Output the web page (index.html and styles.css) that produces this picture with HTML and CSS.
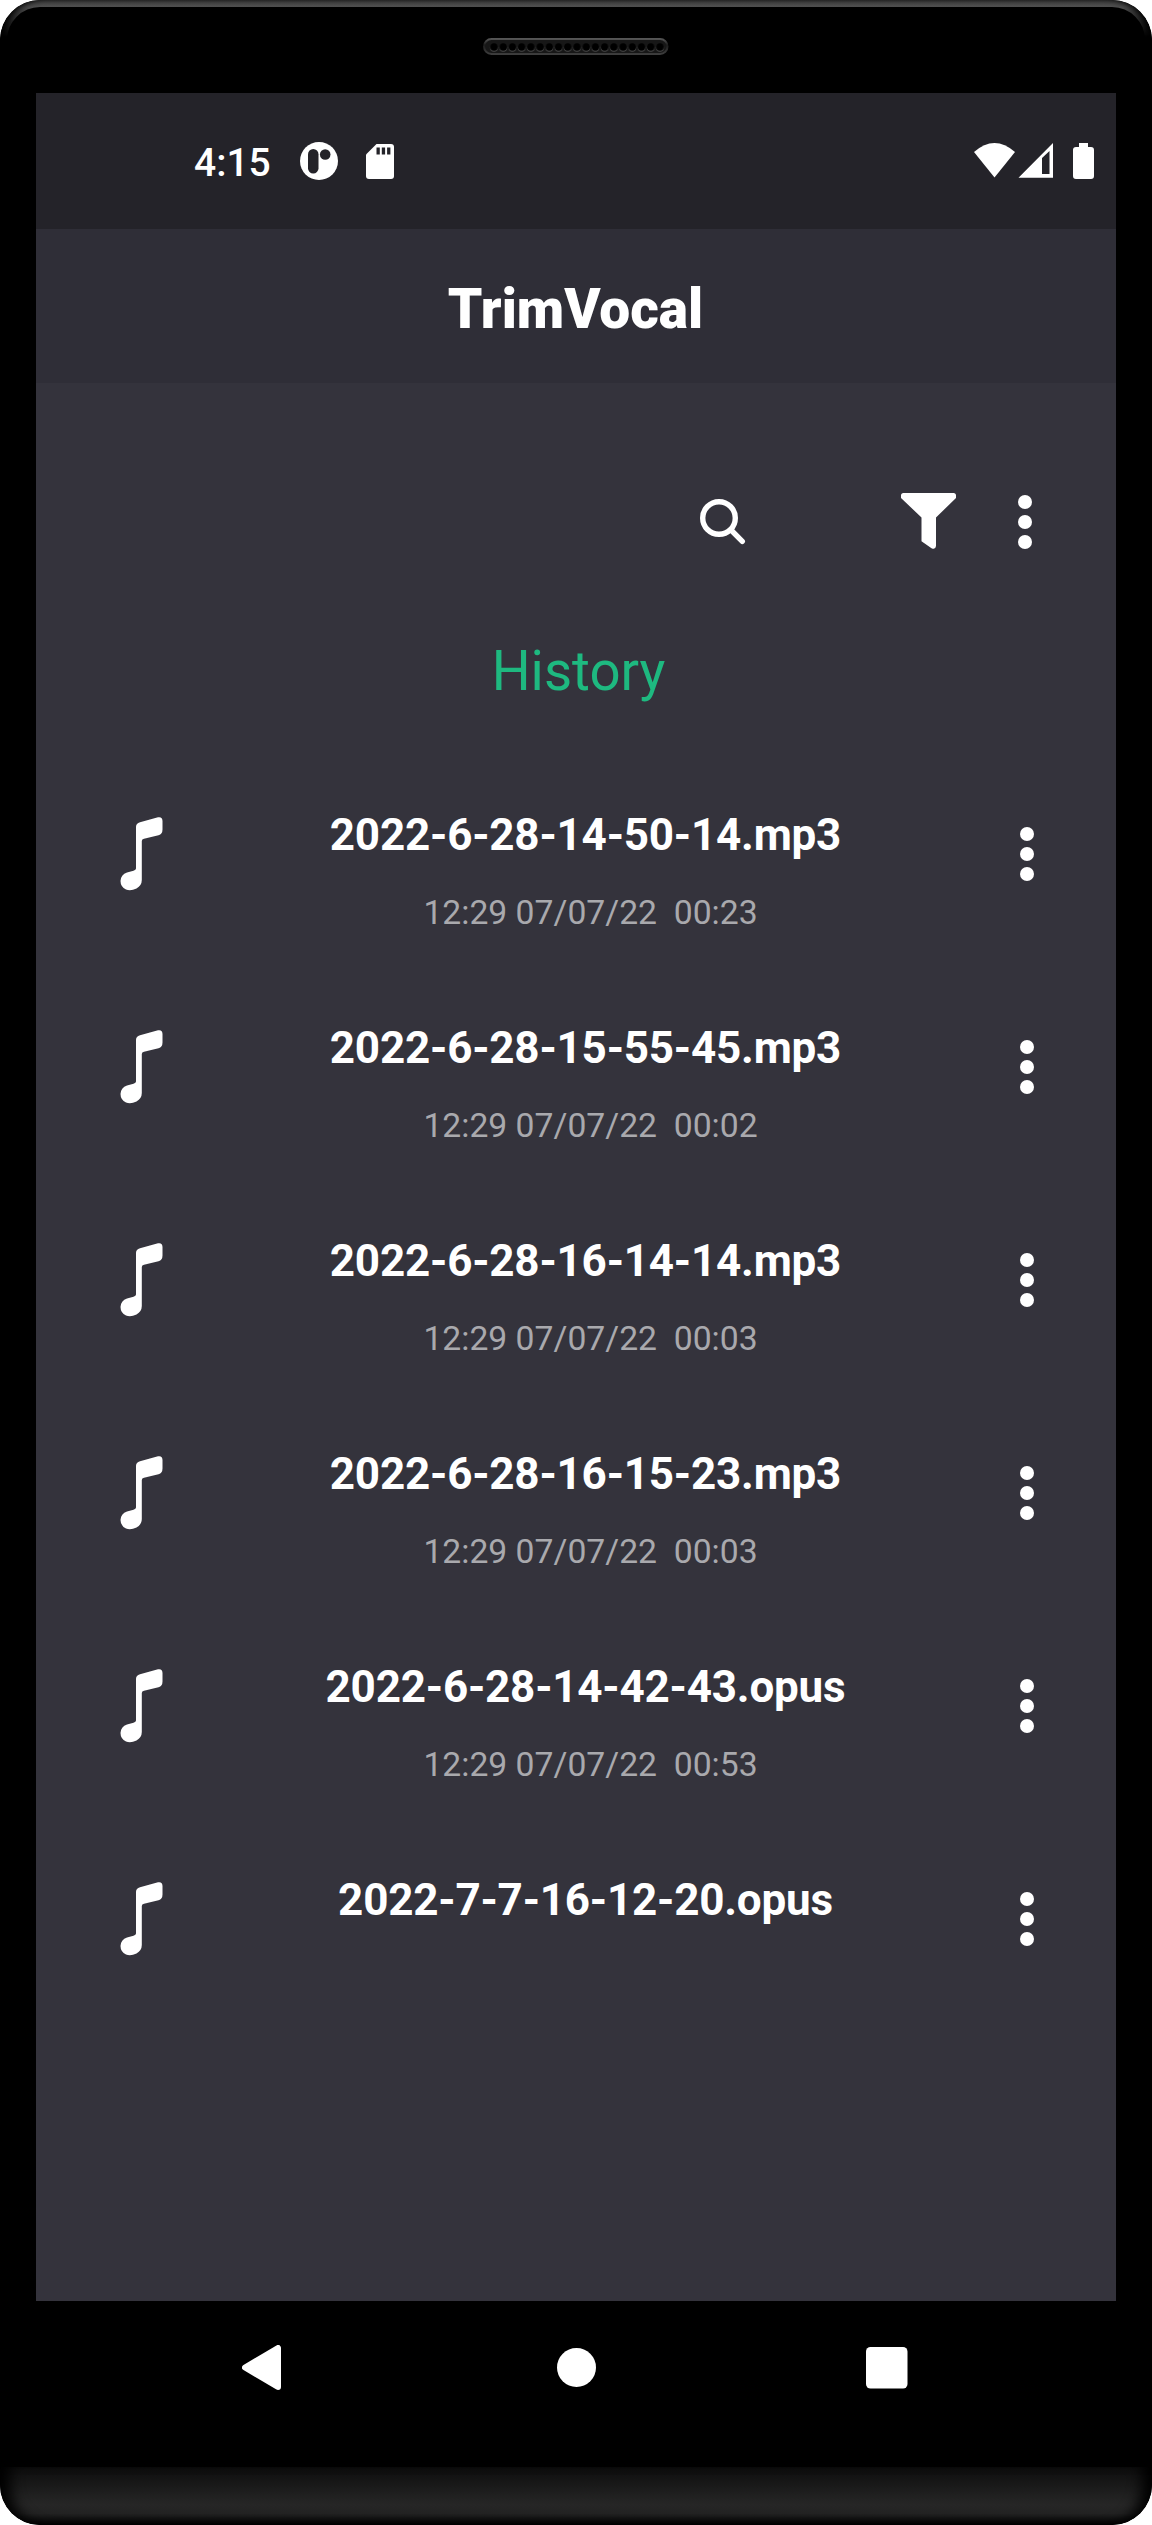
FILE: index.html
```html
<!DOCTYPE html>
<html lang="en">
<head>
<meta charset="utf-8">
<title>TrimVocal</title>
<link rel="stylesheet" href="styles.css">
</head>
<body>
<svg class="defs" width="0" height="0" aria-hidden="true">
  <symbol id="dots" viewBox="0 0 14 54"><circle cx="7" cy="7" r="7"/><circle cx="7" cy="27" r="7"/><circle cx="7" cy="47" r="7"/></symbol>
  <symbol id="note" viewBox="0 0 43 74"><path d="M20 5.200L38 .3Q42.500-.5 42.500 4V12.500Q42.500 17 38.500 18.200L24 21.800Q21.800 22.400 21.800 24V63Q21.800 68.500 16.500 71.500Q10.500 74.500 6 72.500Q.5 69.800.5 64Q.8 57.500 7 55.500L13.500 53.700Q16 53 16 51.500V10Q16 6.200 20 5.200Z"/></symbol>
</svg>
<div class="phone">
  <div class="earpiece">
    <svg width="186" height="18" viewBox="0 0 186 18">
      <defs>
        <linearGradient id="rim" x2="0" y2="1"><stop offset="0" stop-color="#555"/><stop offset=".4" stop-color="#1c1c1c"/><stop offset="1" stop-color="#3d3d3d"/></linearGradient>
        <pattern id="holes" x="6.400" y="0" width="9.220" height="18" patternUnits="userSpaceOnUse"><circle cx="4.600" cy="9.800" r="3.900" fill="#484848"/><circle cx="4.600" cy="9" r="3.700" fill="#000"/></pattern>
      </defs>
      <rect x="1" y="1" width="183.500" height="15" rx="7.500" fill="#171717" stroke="url(#rim)" stroke-width="2"/>
      <rect x="6.400" width="175.180" height="18" fill="url(#holes)"/>
    </svg>
  </div>
  <main class="screen">
    <div class="status">
      <span class="clock">4:15</span>
      <svg class="app-badge" width="38" height="38" viewBox="0 0 38 38"><circle cx="19" cy="19" r="19" fill="#fff"/><rect x="8" y="7" width="10.500" height="24.500" rx="5.250" fill="#242329"/><circle cx="25.200" cy="12.500" r="5.300" fill="#242329"/></svg>
      <svg class="sd" width="28" height="35" viewBox="0 0 28 35"><path d="M10.500 0H25Q28 0 28 3V32Q28 35 25 35H3Q0 35 0 32V10.500Z" fill="#fff"/><path d="M10.500 3.500h3.300v7h-3.300zM15.800 3.500h3.300v7h-3.300zM21.100 3.500h3.300v7h-3.300z" fill="#242329"/></svg>
      <svg class="signal" width="120" height="36" viewBox="0 0 120 36" fill="#fff"><path d="M0 9Q20.500-9 41 9L20.500 34.500Z"/><path fill-rule="evenodd" d="M44.500 34.700L79 0V34.700ZM68 15V31H75.500V8Z"/><path d="M105 0h9v4h3q3 0 3 3v26q0 3-3 3h-15q-3 0-3-3V7q0-3 3-3h3z"/></svg>
    </div>
    <header class="appbar"><h1>TrimVocal</h1></header>
    <div class="tools">
      <svg class="search" width="46" height="46" viewBox="0 0 46 46" fill="none" stroke="#fff" stroke-width="5.400" stroke-linecap="round"><circle cx="19" cy="19" r="16.300"/><path d="M31 31L42.300 42.300"/></svg>
      <svg class="filter" width="55" height="56" viewBox="0 0 55 56" fill="#fff"><path d="M2.500 0H52.500Q55 0 55 2.500V5L35 24.500V53Q34.500 57 30.500 55.200L20.500 48.300V24.500L0 5V2.500Q0 0 2.500 0Z"/></svg>
      <svg class="more" width="14" height="54" fill="#fff"><use href="#dots"/></svg>
    </div>
    <h2>History</h2>
    <ul class="list">
      <li><svg class="note"><use href="#note"/></svg><div class="info"><b>2022-6-28-14-50-14.mp3</b><span>12:29 07/07/22&nbsp; 00:23</span></div><svg class="more"><use href="#dots"/></svg></li>
      <li><svg class="note"><use href="#note"/></svg><div class="info"><b>2022-6-28-15-55-45.mp3</b><span>12:29 07/07/22&nbsp; 00:02</span></div><svg class="more"><use href="#dots"/></svg></li>
      <li><svg class="note"><use href="#note"/></svg><div class="info"><b>2022-6-28-16-14-14.mp3</b><span>12:29 07/07/22&nbsp; 00:03</span></div><svg class="more"><use href="#dots"/></svg></li>
      <li><svg class="note"><use href="#note"/></svg><div class="info"><b>2022-6-28-16-15-23.mp3</b><span>12:29 07/07/22&nbsp; 00:03</span></div><svg class="more"><use href="#dots"/></svg></li>
      <li><svg class="note"><use href="#note"/></svg><div class="info"><b>2022-6-28-14-42-43.opus</b><span>12:29 07/07/22&nbsp; 00:53</span></div><svg class="more"><use href="#dots"/></svg></li>
      <li><svg class="note"><use href="#note"/></svg><div class="info"><b>2022-7-7-16-12-20.opus</b></div><svg class="more"><use href="#dots"/></svg></li>
    </ul>
  </main>
  <nav class="nav">
    <svg width="39" height="45" viewBox="0 0 39 45"><path d="M3 22.500L36 3V42Z" fill="#fff" stroke="#fff" stroke-width="6" stroke-linejoin="round"/></svg>
    <svg width="39" height="39"><circle cx="19.500" cy="19.500" r="19.500" fill="#fff"/></svg>
    <svg width="42" height="42"><rect width="41.500" height="41.500" rx="4.500" fill="#fff"/></svg>
  </nav>
  <div class="chin"></div>
</div>
</body>
</html>
```
FILE: styles.css
```css
* { box-sizing: border-box; margin: 0; padding: 0; }
body { background: #fff; font-family: Roboto, "Liberation Sans", sans-serif; color: #fff; }
svg { display: block; flex: none; }
.defs { position: absolute; }
.phone { position: relative; width: 1152px; height: 2525px; border-radius: 40px; overflow: hidden; background: #000; display: flex; flex-direction: column; }
.phone::before { content: ""; position: absolute; inset: 0 0 auto; height: 42px; border-radius: 40px 40px 0 0; background: linear-gradient(#484848, #505050 7px, #000 38px); box-shadow: inset 7px 0 7px -2px #000, inset -7px 0 7px -2px #000; }
.phone::after { content: ""; position: absolute; inset: 7px 7px auto; height: 36px; border-radius: 33px 33px 0 0; background: #000; }
.earpiece { position: relative; z-index: 1; height: 93px; padding: 38px 0 0 483px; flex: none; }
.screen { height: 2208px; margin: 0 36px; background: #34333c; flex: none; }
.status { height: 136px; background: #242329; display: flex; padding: 0 21px 0 158px; align-items: flex-start; }
.clock { font-size: 39px; font-weight: 500; line-height: 46px; margin-top: 47px; width: 106px; white-space: nowrap; }
.app-badge { margin-top: 49px; }
.sd { margin: 51px 0 0 28px; }
.signal { margin: 50px 1px 0 auto; }
.appbar { height: 154px; padding-top: 6px; background: #2f2e37; display: flex; align-items: center; justify-content: center; }
h1 { font-size: 55px; font-weight: 900; line-height: 64px; padding-right: 1px; }
.tools { height: 256px; display: flex; align-items: flex-start; padding-left: 664px; }
.search { margin-top: 116px; }
.filter { margin: 110px 0 0 155px; }
.tools .more { margin: 112px 0 0 62px; }
h2 { font-size: 54.600px; font-weight: 400; line-height: 64px; color: #1eb980; text-align: center; padding-left: 5px; }
.list { list-style: none; padding-top: 106px; }
.list li { height: 213px; display: flex; align-items: flex-start; padding: 0 82px 0 84px; }
.note { width: 43px; height: 74px; margin-top: 8px; fill: #fff; }
.info { flex: 1; display: flex; flex-direction: column; align-items: center; padding-right: 12px; }
.info b { font-size: 44px; letter-spacing: -0.2px; line-height: 52px; font-weight: 700; white-space: nowrap; }
.info span { font-size: 33.700px; line-height: 40px; margin-top: 32px; padding-left: 10px; color: #a9a9ad; white-space: nowrap; }
.list .more { width: 14px; height: 54px; margin-top: 18px; fill: #fff; }
.nav { height: 166px; display: flex; align-items: center; padding: 0 0 33px 242px; flex: none; }
.nav svg:nth-child(2) { margin-left: 276px; }
.nav svg:nth-child(3) { margin-left: 270px; }
.chin { height: 58px; border-radius: 0 0 40px 40px; background: linear-gradient(#0d0d0d, #262626 65%, #222 80%, #000); box-shadow: inset 18px 0 14px -8px #000, inset -18px 0 14px -8px #000; flex: none; }
```
